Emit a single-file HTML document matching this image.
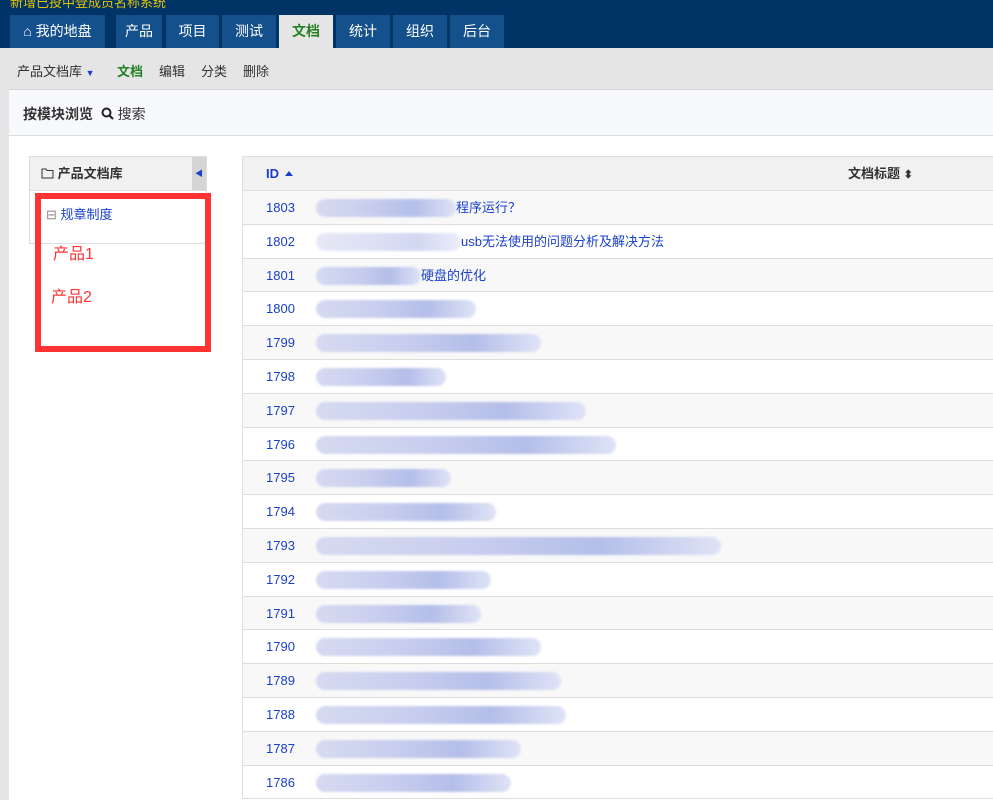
<!DOCTYPE html><html><head><meta charset="utf-8"><style>
*{margin:0;padding:0;box-sizing:border-box}
body{width:993px;height:800px;overflow:hidden;background:#e5e5e5;font-family:"Liberation Sans","Noto Sans CJK SC",sans-serif;font-size:13px;position:relative}
.hdr{position:absolute;left:0;top:0;width:993px;height:48px;background:#003366}
.tab{position:absolute;top:15px;height:33px;background:#14508c;color:#fff;font-size:14px;line-height:33px;text-align:center}
.tab.act{background:#e5e5e5;color:#238023;font-weight:bold}
.sub{position:absolute;top:61px;font-size:13px;color:#333}
.panel{position:absolute;left:9px;top:89px;width:984px;height:711px;background:#fff;border-top:1px solid #ccc}
.bar{position:absolute;left:9px;top:89px;width:984px;height:47px;background:#f8f9fc;border-bottom:1px solid #ddd;border-top:1px solid #d5d5d5}
.tree{position:absolute;left:29px;top:156px;width:178px;height:88px;border:1px solid #ddd;background:#fff}
.th{height:34px;background:#f1f1f1;border-bottom:1px solid #ddd;font-weight:bold;line-height:33px;padding-left:11px;color:#333}
.tbl{position:absolute;left:242px;top:156px;width:751px;border-left:1px solid #ddd;border-top:1px solid #ddd}
.row{height:33.8px;border-bottom:1px solid #ddd;position:relative;color:#1a3fcc;line-height:33px}
.row:nth-child(even){background:#f8f8f8}
.row .id{position:absolute;left:23px}
.blur{position:absolute;left:73px;top:8px;height:18px;border-radius:9px;background:linear-gradient(90deg,#d6daf1,#c7cdee 40%,#b4bee9 70%,#dfe3f6);filter:blur(1px)}
.row .t{position:absolute}
</style></head><body>
<div class="hdr"><div style="position:absolute;left:10px;top:-8px;color:#e6c200;font-size:13px">新增已投中登成员名称系统</div></div>
<div class="tab" style="left:10px;width:95px">&#8962; 我的地盘</div>
<div class="tab" style="left:116px;width:46px">产品</div>
<div class="tab" style="left:166px;width:53px">项目</div>
<div class="tab" style="left:222px;width:54px">测试</div>
<div class="tab act" style="left:279px;width:54px">文档</div>
<div class="tab" style="left:336px;width:54px">统计</div>
<div class="tab" style="left:393px;width:54px">组织</div>
<div class="tab" style="left:450px;width:54px">后台</div>
<div class="sub" style="left:17px">产品文档库 <span style="color:#1a3fcc;font-size:9px">▼</span></div>
<div class="sub" style="left:117px;color:#238023;font-weight:bold">文档</div>
<div class="sub" style="left:159px">编辑</div>
<div class="sub" style="left:201px">分类</div>
<div class="sub" style="left:243px">删除</div>
<div class="panel"></div>
<div class="bar"><div style="position:absolute;left:14px;top:14px;font-weight:bold;color:#333;font-size:14px">按模块浏览 &nbsp;<svg width="13" height="13" viewBox="0 0 13 13" style="vertical-align:-1px"><circle cx="5.5" cy="5.5" r="4" fill="none" stroke="#222" stroke-width="2"/><path d="M8.5 8.5L12 12" stroke="#222" stroke-width="2.2"/></svg> <span style="font-weight:normal">搜索</span></div></div>
<div class="tree"><div class="th"><svg width="13" height="11" viewBox="0 0 13 11" style="vertical-align:-1px"><path d="M1 1h4l1 1.5h6V10H1z" fill="none" stroke="#333"/></svg> 产品文档库</div>
<div style="position:absolute;right:0;top:0;width:14px;height:33px;background:#d5d5d5;color:#1a3fcc;font-size:8px;line-height:33px;text-align:center">◀</div>
<div style="position:absolute;left:16px;top:47px;color:#1a3fcc"><span style="color:#888">⊟</span> 规章制度</div></div>
<div style="position:absolute;left:35px;top:193px;width:176px;height:159px;border:6px solid #f33"></div>
<div style="position:absolute;left:53px;top:240px;color:#f33;font-size:16px">产品1</div>
<div style="position:absolute;left:51px;top:283px;color:#f33;font-size:16px">产品2</div>
<div class="tbl">
<div class="row" style="background:#f1f1f1;height:34px"><b class="id" style="font-size:13px">ID <span style="display:inline-block;border:4px solid transparent;border-bottom:5px solid #1a3fcc;border-top:0;vertical-align:2px;margin-left:2px"></span></b><b style="position:absolute;left:605px;color:#333">文档标题 <span style="font-size:11px">⬍</span></b></div>
<div class="row"><span class="id">1803</span><div class="blur" style="width:140px"></div><span class="t" style="left:213px">程序运行？</span></div>
<div class="row"><span class="id">1802</span><div class="blur" style="width:145px;opacity:.6"></div><span class="t" style="left:218px">usb无法使用的问题分析及解决方法</span></div>
<div class="row"><span class="id">1801</span><div class="blur" style="width:105px"></div><span class="t" style="left:178px">硬盘的优化</span></div>
<div class="row"><span class="id">1800</span><div class="blur" style="width:160px"></div></div>
<div class="row"><span class="id">1799</span><div class="blur" style="width:225px"></div></div>
<div class="row"><span class="id">1798</span><div class="blur" style="width:130px"></div></div>
<div class="row"><span class="id">1797</span><div class="blur" style="width:270px"></div></div>
<div class="row"><span class="id">1796</span><div class="blur" style="width:300px"></div></div>
<div class="row"><span class="id">1795</span><div class="blur" style="width:135px"></div></div>
<div class="row"><span class="id">1794</span><div class="blur" style="width:180px"></div></div>
<div class="row"><span class="id">1793</span><div class="blur" style="width:405px"></div></div>
<div class="row"><span class="id">1792</span><div class="blur" style="width:175px"></div></div>
<div class="row"><span class="id">1791</span><div class="blur" style="width:165px"></div></div>
<div class="row"><span class="id">1790</span><div class="blur" style="width:225px"></div></div>
<div class="row"><span class="id">1789</span><div class="blur" style="width:245px"></div></div>
<div class="row"><span class="id">1788</span><div class="blur" style="width:250px"></div></div>
<div class="row"><span class="id">1787</span><div class="blur" style="width:205px"></div></div>
<div class="row"><span class="id">1786</span><div class="blur" style="width:195px"></div></div>
</div>
</body></html>
